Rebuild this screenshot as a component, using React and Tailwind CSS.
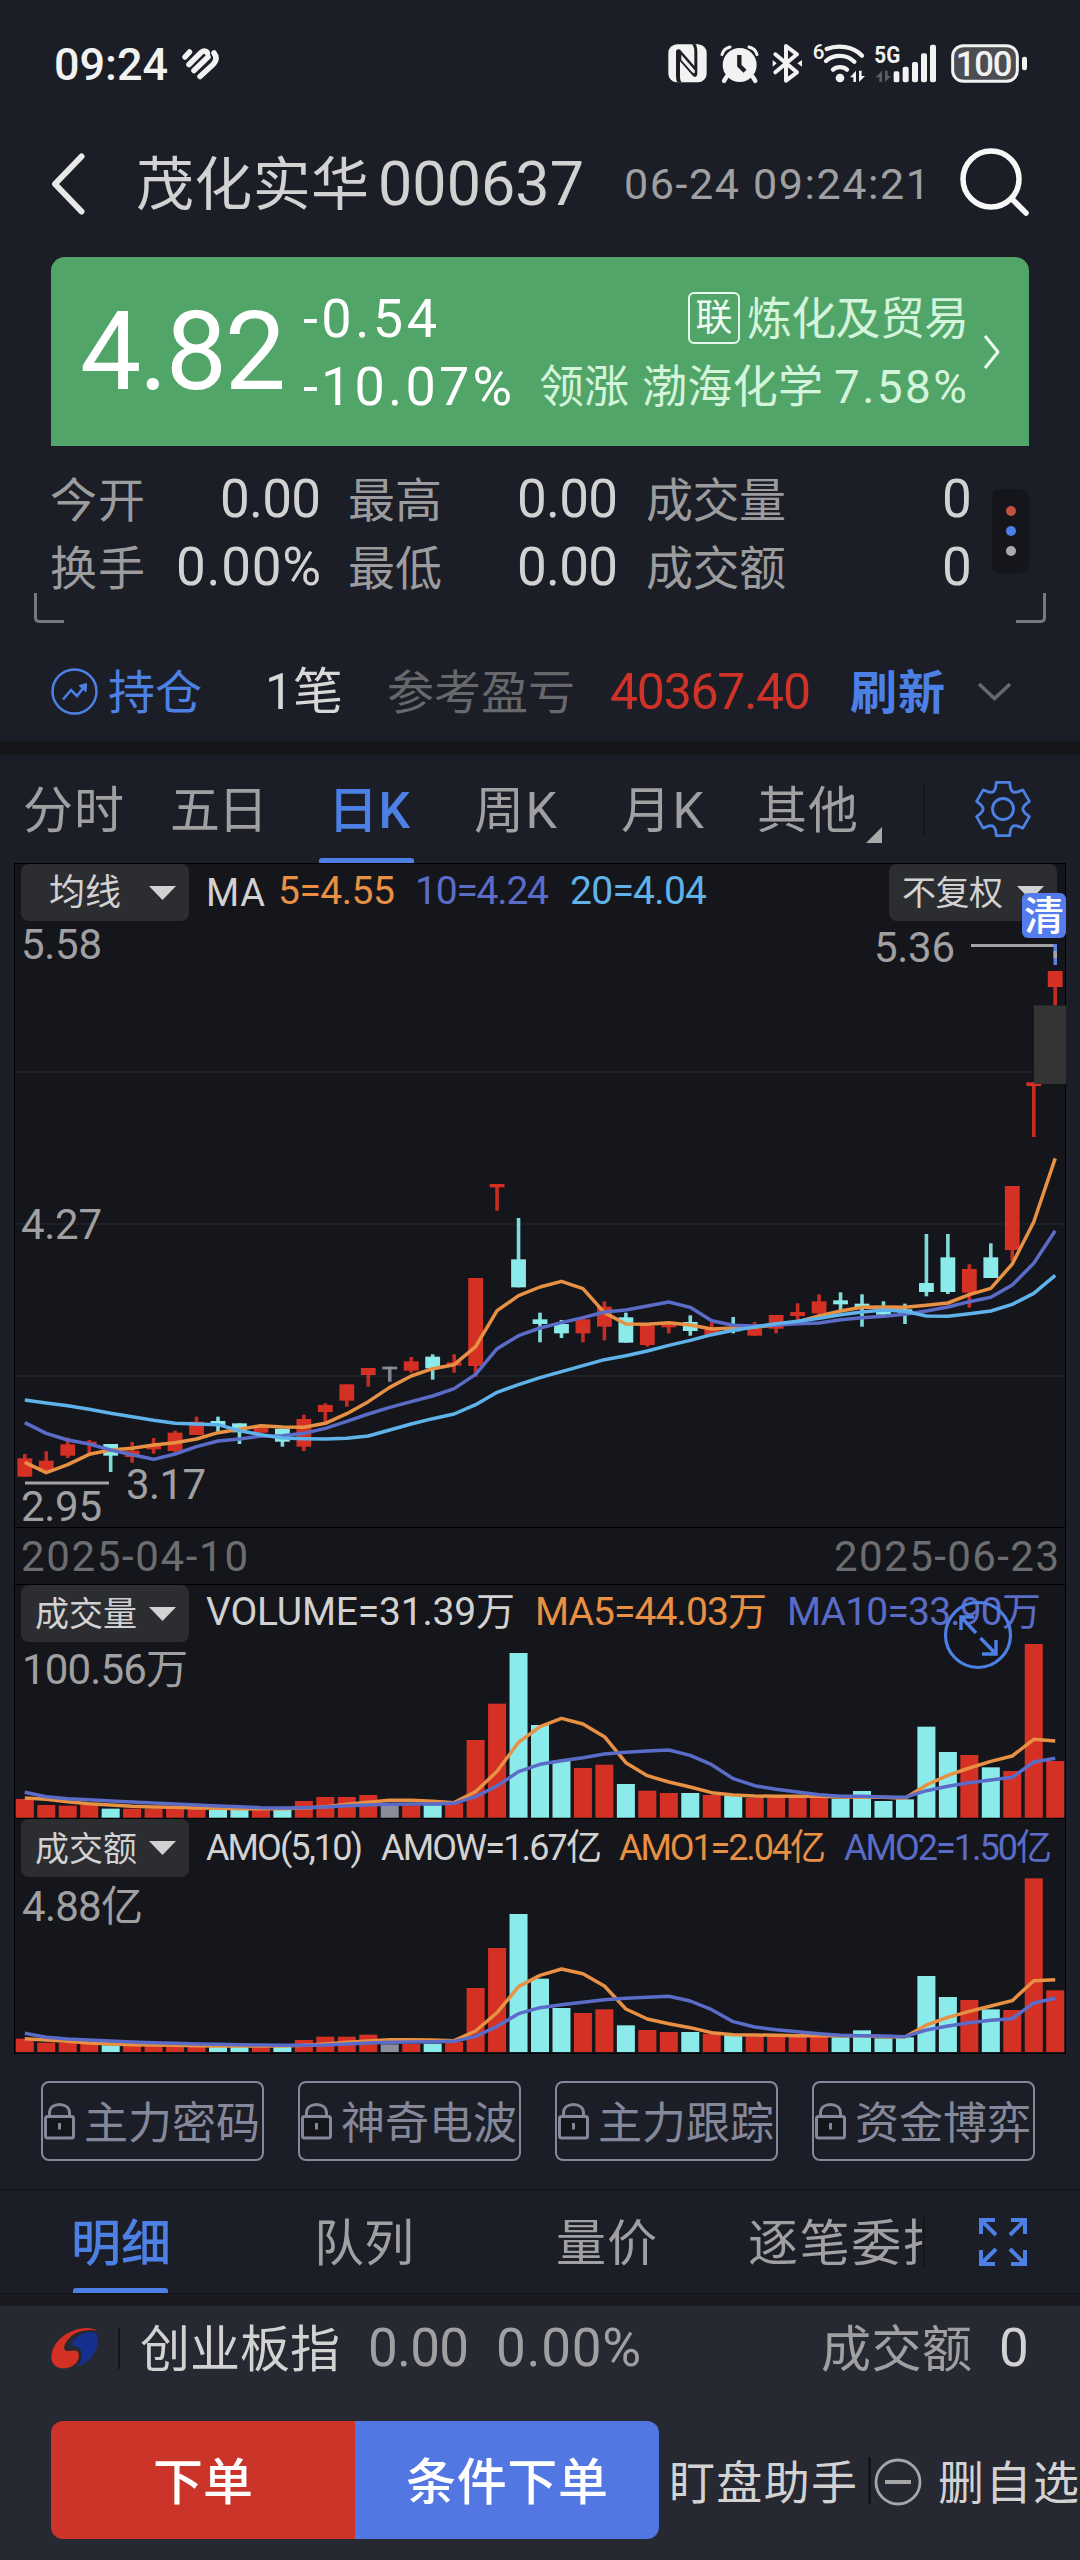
import React, { useLayoutEffect, useRef, useState } from 'react';

/* Spreads its characters so that the text fills exactly the width w. */
function Fit({ w, className = '', children }) {
  const ref = useRef(null);
  const [gap, setGap] = useState(0);
  useLayoutEffect(() => {
    const natural = ref.current.getBoundingClientRect().width;
    const n = Array.from(children).length;
    if (n > 1) setGap((w - natural) / (n - 1));
  }, []);
  return (
    <div className={'shrink-0 whitespace-nowrap leading-none ' + className} style={{ width: w }}>
      <span ref={ref} className="inline-block" style={{ letterSpacing: gap }}>
        {children}
      </span>
    </div>
  );
}

const RED = '#d53024';
const CYAN = '#8bebeb';
const GRAY = '#8b8d9b';
const tone = { r: RED, g: CYAN, n: GRAY };
const X0 = 24.8;
const STEP = 21.467;
const cx = (i) => X0 + STEP * i;

const dirs = 'rrrrgrrrrggrgrrrrnrgrrrgggrrgrrgrgrrrrggggggrgrrr'.split('');

/* [high, body top, body bottom, low] in thirds of a pixel, measured from y = 860 */
const candles = [
  [1782, 1795, 1850, 1850], [1774, 1802, 1835, 1835], [1733, 1753, 1787, 1794], [1740, 1745, 1752, 1780],
  [1752, 1752, 1787, 1836], [1746, 1772, 1791, 1808], [1734, 1756, 1768, 1781], [1712, 1718, 1773, 1778],
  [1670, 1685, 1725, 1725], [1670, 1683, 1696, 1716], [1690, 1690, 1717, 1752], [1695, 1701, 1718, 1718],
  [1706, 1706, 1745, 1760], [1664, 1677, 1760, 1773], [1630, 1635, 1656, 1685], [1573, 1573, 1622, 1640],
  [1524, 1524, 1545, 1580], [1520, 1520, 1528, 1565], [1491, 1504, 1532, 1538], [1483, 1490, 1525, 1559],
  [1483, 1507, 1517, 1538], [1254, 1254, 1518, 1550], [972, 972, 982, 1052], [1074, 1198, 1282, 1282],
  [1358, 1378, 1392, 1447], [1380, 1392, 1420, 1434], [1370, 1378, 1420, 1447], [1324, 1340, 1400, 1441],
  [1358, 1372, 1448, 1448], [1390, 1398, 1455, 1460], [1385, 1393, 1402, 1420], [1366, 1386, 1413, 1427],
  [1387, 1407, 1424, 1424], [1371, 1405, 1414, 1420], [1386, 1405, 1427, 1427], [1365, 1365, 1406, 1420],
  [1330, 1356, 1368, 1382], [1303, 1324, 1360, 1365], [1297, 1321, 1333, 1350], [1303, 1331, 1342, 1400],
  [1324, 1345, 1364, 1365], [1331, 1348, 1358, 1392], [1122, 1269, 1296, 1309], [1122, 1192, 1296, 1302],
  [1213, 1227, 1298, 1343], [1150, 1192, 1254, 1254], [978, 978, 1170, 1204], [667, 667, 678, 831],
  [333, 333, 381, 436],
];
const ma5 = [1807, 1838, 1814, 1783, 1770, 1765, 1755, 1748, 1737, 1718, 1708, 1697, 1701, 1702, 1690, 1661, 1625, 1582, 1548, 1526, 1514, 1460, 1352, 1307, 1281, 1264, 1286, 1358, 1392, 1393, 1388, 1395, 1407, 1404, 1402, 1395, 1385, 1368, 1353, 1342, 1341, 1342, 1336, 1329, 1304, 1285, 1212, 1086, 895];
const ma10 = [1688, 1720, 1740, 1752, 1770, 1784, 1798, 1782, 1760, 1743, 1737, 1728, 1727, 1720, 1705, 1684, 1662, 1642, 1625, 1608, 1586, 1543, 1466, 1427, 1404, 1388, 1373, 1356, 1350, 1338, 1326, 1342, 1382, 1396, 1398, 1395, 1391, 1389, 1379, 1373, 1369, 1363, 1353, 1341, 1325, 1312, 1275, 1210, 1112];
const ma20 = [1620, 1629, 1637, 1648, 1660, 1670, 1681, 1690, 1692, 1694, 1712, 1724, 1734, 1736, 1737, 1735, 1728, 1710, 1692, 1676, 1662, 1634, 1597, 1574, 1553, 1535, 1517, 1499, 1487, 1473, 1456, 1441, 1424, 1411, 1401, 1391, 1384, 1375, 1364, 1356, 1350, 1354, 1368, 1369, 1361, 1353, 1333, 1300, 1246];

/* thirds of a pixel from y = 1520 */
const vol = [837, 855, 857, 855, 866, 866, 866, 864, 864, 869, 869, 869, 869, 843, 831, 831, 825, 857, 856, 856, 850, 660, 551, 399, 615, 722, 744, 734, 792, 812, 819, 819, 825, 828, 834, 834, 834, 834, 836, 813, 843, 838, 620, 696, 705, 742, 753, 372, 723];
const vol5 = [834, 838, 845, 851, 855, 859, 861, 862, 864, 865, 866, 866, 866, 864, 860, 853, 847, 841, 841, 844, 848, 815, 754, 667, 620, 595, 612, 650, 728, 767, 786, 801, 818, 825, 828, 829, 829, 829, 831, 832, 832, 835, 795, 766, 744, 724, 708, 658, 663];
const vol10 = [817, 830, 836, 839, 843, 846, 849, 852, 855, 858, 860, 863, 864, 863, 861, 857, 855, 853, 852, 852, 850, 830, 798, 755, 733, 722, 713, 702, 697, 693, 690, 706, 734, 776, 797, 808, 816, 824, 829, 829, 831, 832, 812, 799, 788, 780, 772, 726, 715];

/* thirds of a pixel from y = 1810 */
const amo = [686, 698, 698, 696, 706, 706, 706, 705, 704, 709, 709, 709, 709, 690, 680, 680, 674, 703, 702, 701, 696, 534, 414, 312, 506, 594, 609, 598, 646, 660, 666, 666, 671, 674, 679, 679, 679, 679, 682, 661, 685, 682, 498, 561, 570, 598, 600, 205, 541];
const amo5 = [686, 690, 694, 699, 702, 704, 705, 706, 707, 708, 708, 708, 708, 706, 702, 697, 693, 689, 689, 690, 692, 663, 608, 530, 496, 477, 491, 528, 597, 627, 641, 653, 668, 674, 675, 676, 677, 677, 677, 677, 680, 681, 645, 622, 604, 588, 572, 512, 509];
const amo10 = [670, 682, 687, 690, 693, 696, 698, 700, 702, 703, 704, 705, 706, 706, 705, 702, 699, 697, 696, 695, 694, 679, 649, 611, 593, 584, 577, 569, 565, 562, 559, 573, 599, 635, 651, 659, 665, 671, 676, 677, 678, 680, 660, 648, 638, 631, 626, 579, 565];

function Line({ data, base, color }) {
  return (
    <polyline
      points={data.map((v, i) => `${cx(i)},${base + v / 3}`).join(' ')}
      fill="none"
      stroke={color}
      strokeWidth="3.5"
      strokeLinejoin="round"
    />
  );
}

function Bars({ data, base, bottom }) {
  return data.map((v, i) => (
    <rect key={i} x={Math.max(15.5, cx(i) - 9)} y={base + v / 3} width="18" height={bottom - base - v / 3} fill={tone[dirs[i]]} />
  ));
}

const axis = 'font-[Roboto,"Noto_Sans_CJK_SC",sans-serif] text-[42px]';

function PriceChart() {
  return (
    <svg className="absolute inset-0 overflow-visible" width="1050" height="663" viewBox="15 864 1050 663">
      {[1072, 1224, 1376].map((y) => (
        <line key={y} x1="15" x2="1065" y1={y} y2={y} stroke="#212328" strokeWidth="1.5" />
      ))}
      {candles.map(([h, t, b, l], i) => (
        <g key={i} fill={tone[dirs[i]]}>
          <rect x={cx(i) - 1.8} y={860 + h / 3} width="3.6" height={(l - h) / 3} opacity="0.92" />
          <rect x={cx(i) - 7.4} y={860 + t / 3} width="14.8" height={(b - t) / 3} />
        </g>
      ))}
      <Line data={ma5} base={860} color="#e89043" />
      <Line data={ma10} base={860} color="#5a6cc8" />
      <Line data={ma20} base={860} color="#5fb3ea" />
      <rect x="1034" y="1005.5" width="32" height="78.5" fill="#343434" />
      <line x1="971" x2="1056" y1="945.5" y2="945.5" stroke="#a3a3a5" strokeWidth="3" />
      <rect x="1053.5" y="944" width="3.5" height="21" fill="#5b80e6" />
      <rect x="1053.5" y="951" width="3.5" height="7" fill="#a3a3a5" />
      <line x1="25" x2="109" y1="1483" y2="1483" stroke="#a3a3a5" strokeWidth="3" />
      <g fill="#a0a0a2" className={axis}>
        <text x="21" y="959" textLength="81">5.58</text>
        <text x="21" y="1239" textLength="81">4.27</text>
        <text x="21" y="1520.5" textLength="81">2.95</text>
        <text x="126" y="1498.5" textLength="80">3.17</text>
        <text x="874" y="961.5" textLength="81">5.36</text>
      </g>
    </svg>
  );
}

function Caret() {
  return (
    <svg width="27" height="14" viewBox="0 0 27 14" className="shrink-0">
      <path d="M0 0H27L13.5 14Z" fill="#d2d2d2" />
    </svg>
  );
}

function StatusIcons() {
  return (
    <svg width="380" height="66" viewBox="0 0 1140 198" className="ml-auto mr-[40px] -mt-[2px] shrink-0" fill="#f2f2f2">
      {/* NFC */}
      <rect x="25" y="43" width="115" height="114" rx="26" />
      <path d="M52 157C48 150 48 142 48 130V66C48 56 58 56 63 62L103 108V62C103 52 99 46 95 43H107C112 52 112 58 112 70V130C112 142 104 144 97 136L60 94V140C60 148 62 154 66 157Z" fill="#1b1e25" />
      <path d="M64 74L104 121V128C101 131 99 129 96 126L64 90Z" />
      {/* alarm clock */}
      <circle cx="239" cy="105" r="51" />
      <path d="M238 75V107L255 124" fill="none" stroke="#1b1e25" strokeWidth="13" />
      <path d="M186 74C189 62 198 54 210 51M291 74C288 62 279 54 267 51" fill="none" stroke="#f2f2f2" strokeWidth="9" strokeLinecap="round" />
      <path d="M200 140L192 153M278 140L286 153" stroke="#f2f2f2" strokeWidth="13" strokeLinecap="round" />
      {/* bluetooth */}
      <path d="M346 73L411 127L378 152V48L411 73L346 127" fill="none" stroke="#f2f2f2" strokeWidth="12" strokeLinejoin="round" strokeLinecap="round" />
      <path d="M338 90L350 100L338 110ZM426 90L412 100L426 110Z" />
      {/* wifi */}
      <text x="458" y="86" className="font-[Roboto] text-[62px] font-medium">6</text>
      <path d="M500 57C535 43 580 50 606 77M498 93C520 72 560 72 583 95M519 119C530 109 550 109 561 119" fill="none" stroke="#f2f2f2" strokeWidth="13" strokeLinecap="round" />
      <circle cx="540" cy="144" r="13" />
      <path d="M588 122V156H580V142H570ZM597 122V156L615 138H605V122Z" />
      {/* mobile signal */}
      <text x="643" y="98" textLength="78" lengthAdjust="spacingAndGlyphs" className="font-[Roboto] text-[72px] font-bold">5G</text>
      <path d="M666 122V156H658V142H647ZM675 122V156L693 138H683V122Z" fill="#5c5d62" />
      <rect x="701" y="124" width="17" height="33" rx="5" />
      <rect x="728" y="110" width="18" height="47" rx="6" />
      <rect x="756" y="96" width="18" height="61" rx="6" />
      <rect x="783" y="70" width="18" height="87" rx="6" />
      <rect x="810" y="44" width="18" height="113" rx="6" />
      {/* battery */}
      <rect x="878" y="47" width="194" height="107" rx="32" fill="#4c4d52" stroke="#f2f2f2" strokeWidth="9" />
      <rect x="1086" y="80" width="15" height="41" rx="7" />
      <text x="887" y="137" textLength="170" className="font-[Roboto] text-[104px] font-medium">100</text>
    </svg>
  );
}

const gearPoints = (() => {
  const p = [];
  for (let k = 0; k < 6; k++) {
    const a = k * 60 - 90;
    [[-27, 20], [-20, 22], [-14, 27.5], [14, 27.5], [20, 22], [27, 20]].forEach(([d, r]) => {
      const t = ((a + d) * Math.PI) / 180;
      p.push(`${30 + r * Math.cos(t)},${30 + r * Math.sin(t)}`);
    });
  }
  return p.join(' ');
})();

function Stat({ label, lw, value, vw, width }) {
  return (
    <div className={'flex h-[68px] shrink-0 items-center justify-between ' + width}>
      <Fit w={lw} className="mt-[4px] text-[47px] text-[#9c9c9e]">{label}</Fit>
      <Fit w={vw} className="mt-[2px] text-[53px] text-[#d2d2d2]">{value}</Fit>
    </div>
  );
}

function LockButton({ children }) {
  return (
    <div className="flex h-[80px] w-[223px] shrink-0 items-center rounded-[8px] border-2 border-[#85879a] pl-px">
      <svg width="31" height="37" viewBox="0 0 31 37" className="shrink-0" fill="none" stroke="#85879a">
        <path d="M5.5 13V10C5.5 4.5 10 1.5 15.5 1.5S25.5 4.5 25.5 10V13" strokeWidth="3" />
        <rect x="1.5" y="13.5" width="28" height="21.5" rx="2" fill="#15161b" strokeWidth="3" />
        <path d="M15.5 20V26.5" strokeWidth="3" />
      </svg>
      <Fit w={176} className="ml-[9px] mt-[6px] text-[44px] text-[#85879a]">{children}</Fit>
    </div>
  );
}

export default function App() {
  return (
    <div className='flex h-[2560px] w-[1080px] flex-col overflow-hidden bg-[#1b1e26] font-[Roboto,"Noto_Sans_CJK_SC",sans-serif]'>
      {/* status bar */}
      <div className="flex h-[128px] shrink-0 items-center">
        <Fit w={114} className="ml-[54px] text-[45px] font-medium text-[#f2f2f2]">09:24</Fit>
        <svg width="38" height="32" viewBox="0 0 38 32" className="ml-[13px] shrink-0" fill="none" stroke="#f2f2f2" strokeWidth="5.5" strokeLinecap="round">
          <path d="M4 9L8.500 4M8 16.500L20 4.500C23 2 26 3 26.500 5.500M13 22.500L27 9M33 5C36 9 35.500 13 32 16.500L19 28.500" />
        </svg>
        <StatusIcons />
      </div>

      {/* title bar */}
      <div className="flex h-[111px] shrink-0 items-center">
        <svg width="34" height="62" viewBox="0 0 34 62" className="ml-[51px] shrink-0">
          <path d="M30.5 3.5L4 31L30.5 58.5" fill="none" stroke="#e8e8e8" strokeWidth="6" strokeLinecap="round" strokeLinejoin="round" />
        </svg>
        <Fit w={233} className="ml-[51px] mt-[2px] text-[58px] text-[#d2d2d2]">茂化实华</Fit>
        <Fit w={206} className="ml-[9px] mt-px text-[61px] text-[#d2d2d2]">000637</Fit>
        <Fit w={306} className="ml-[40px] mt-px text-[43px] text-[#a0a0a2]">06-24 09:24:21</Fit>
        <svg width="72" height="72" viewBox="0 0 72 72" className="ml-[29px] shrink-0" fill="none" stroke="#f8f8f8" strokeWidth="5.5" strokeLinecap="round">
          <circle cx="32" cy="31" r="28" />
          <path d="M53 51L67 65" />
        </svg>
      </div>

      {/* price card */}
      <div className="mx-[51px] mt-[18px] flex h-[189px] shrink-0 items-center rounded-t-[14px] bg-[#52a569] text-white">
        <Fit w={206} className="ml-[29px] mt-[2px] text-[109px]">4.82</Fit>
        <div className="ml-[17px] w-[212px] shrink-0 text-[54px]">
          <div className="flex h-[68px] items-center"><Fit w={134} className="mt-[2px]">-0.54</Fit></div>
          <div className="flex h-[68px] items-center"><Fit w={209} className="mt-[2px]">-10.07%</Fit></div>
        </div>
        <div className="ml-[24px] w-[429px] shrink-0 text-[45px] text-[#d4f4dc]">
          <div className="flex h-[68px] items-center justify-end">
            <div className="flex h-[52px] w-[52px] items-center justify-center rounded-[6px] border-2 border-[#e6fbeb] text-[37px] leading-none text-[#effcf2]">
              <span className="mt-[2px]">联</span>
            </div>
            <Fit w={222} className="ml-[7px] mt-[3px] -mr-px">炼化及贸易</Fit>
          </div>
          <div className="flex h-[68px] items-center">
            <Fit w={90} className="mt-[4px]">领涨</Fit>
            <Fit w={181} className="ml-[13px] mt-[4px]">渤海化学</Fit>
            <Fit w={133} className="ml-[11px] mt-[2px] text-[46px]">7.58%</Fit>
          </div>
        </div>
        <svg width="17" height="34" viewBox="0 0 17 34" className="ml-[15px] shrink-0">
          <path d="M2 1L15 17L2 33" fill="none" stroke="#f0fbf2" strokeWidth="3" strokeLinejoin="round" />
        </svg>
      </div>

      {/* quote figures */}
      <div className="flex h-[154px] shrink-0 pl-[50px] pt-[18px]">
        <div className="flex flex-col">
          <Stat label="今开" lw={95} value="0.00" vw={101} width="w-[271px]" />
          <Stat label="换手" lw={95} value="0.00%" vw={145} width="w-[271px]" />
        </div>
        <div className="ml-[27px] flex flex-col">
          <Stat label="最高" lw={94} value="0.00" vw={101} width="w-[270px]" />
          <Stat label="最低" lw={94} value="0.00" vw={101} width="w-[270px]" />
        </div>
        <div className="ml-[28px] flex flex-col">
          <Stat label="成交量" lw={140} value="0" vw={30} width="w-[326px]" />
          <Stat label="成交额" lw={140} value="0" vw={30} width="w-[326px]" />
        </div>
        <div className="ml-[20px] mt-[25px] flex h-[84px] w-[37px] flex-col items-center justify-center gap-[10px] rounded-[8px] bg-[#15161b]">
          <div className="h-[10px] w-[10px] rounded-full bg-[#c05240]" />
          <div className="h-[10px] w-[10px] rounded-full bg-[#4d80e6]" />
          <div className="h-[10px] w-[10px] rounded-full bg-[#ababab]" />
        </div>
      </div>
      <div className="-mt-[7px] flex h-[30px] shrink-0 justify-between px-[34px]">
        <div className="w-[30px] rounded-bl-[5px] border-b-3 border-l-3 border-[#77787b]" />
        <div className="w-[30px] rounded-br-[5px] border-b-3 border-r-3 border-[#77787b]" />
      </div>

      {/* holding summary */}
      <div className="flex h-[118px] shrink-0 items-center pt-[18px]">
        <svg width="47" height="47" viewBox="0 0 47 47" className="ml-[51px] shrink-0" fill="none" stroke="#4d80e4" strokeWidth="2.5">
          <circle cx="23.5" cy="23.5" r="22" />
          <path d="M12 31.5L20 22L26 28L34.5 17" />
          <path d="M28 17.5L35.5 15.5L35 24Z" fill="#4d80e4" strokeWidth="1" />
        </svg>
        <Fit w={94} className="ml-[10px] mt-[3px] text-[47px] text-[#4d80e4]">持仓</Fit>
        <Fit w={78} className="ml-[63px] mt-px text-[50px] text-[#d8d8d8]">1笔</Fit>
        <Fit w={188} className="ml-[44px] mt-[3px] text-[47px] text-[#67686b]">参考盈亏</Fit>
        <Fit w={201} className="ml-[35px] mt-px text-[50px] text-[#cf3227]">40367.40</Fit>
        <Fit w={95} className="ml-[39px] mt-[3px] text-[47px] font-bold text-[#4d80e4]">刷新</Fit>
        <svg width="35" height="19" viewBox="0 0 35 19" className="ml-[32px] shrink-0">
          <path d="M2 2L17.5 16.5L33 2" fill="none" stroke="#67686b" strokeWidth="3.6" />
        </svg>
      </div>
      <div className="h-[14px] shrink-0 bg-[#15161a]" />

      {/* period tabs */}
      <div className="relative flex h-[108px] shrink-0 items-center text-[50px] text-[#a0a0a2]">
        <Fit w={101} className="ml-[23px] mt-[4px]">分时</Fit>
        <Fit w={98} className="ml-[46px] mt-[4px]">五日</Fit>
        <div className="relative ml-[60px] flex h-full items-center">
          <Fit w={82} className="mt-[4px] font-medium text-[#4d80e4]">日K</Fit>
          <div className="absolute bottom-0 -left-[9px] h-[5px] w-[95px] rounded-t-[3px] bg-[#4d80e4]" />
        </div>
        <Fit w={83} className="ml-[64px] mt-[4px]">周K</Fit>
        <Fit w={83} className="ml-[64px] mt-[4px]">月K</Fit>
        <Fit w={101} className="ml-[53px] mt-[4px]">其他</Fit>
        <svg width="16" height="16" viewBox="0 0 16 16" className="mb-[20px] ml-[8px] shrink-0 self-end">
          <path d="M16 0V16H0Z" fill="#a9a9a9" />
        </svg>
        <div className="ml-[41px] h-[51px] w-[2px] bg-[#15161a]" />
        <svg width="60" height="60" viewBox="0 0 60 60" className="ml-[48px] shrink-0" fill="none" stroke="#4d80e4" strokeWidth="2.8" strokeLinejoin="round">
          <polygon points={gearPoints} />
          <circle cx="30" cy="30" r="10.5" />
        </svg>
      </div>

      {/* chart panel */}
      <div className="mx-[14px] h-[1191px] shrink-0 border border-black bg-[#15161b]">
        <div className="relative h-[663px]">
          <PriceChart />
          <div className="relative flex h-[57px] items-center text-[39px]">
            <div className="ml-[6px] flex h-full w-[168px] shrink-0 items-center rounded-[8px] bg-[#2c2d31] pl-[28px]">
              <Fit w={72} className="text-[36px] text-[#d2d2d2]">均线</Fit>
              <div className="ml-[28px] flex"><Caret /></div>
            </div>
            <Fit w={59} className="ml-[17px] text-[38px] text-[#d2d2d2]">MA</Fit>
            <Fit w={117} className="ml-[13px] -mt-[3px] text-[#e89043]">5=4.55</Fit>
            <Fit w={134} className="ml-[20px] -mt-[3px] text-[#5a6cc8]">10=4.24</Fit>
            <Fit w={137} className="ml-[21px] -mt-[3px] text-[#5fb3ea]">20=4.04</Fit>
            <div className="ml-[182px] flex h-full w-[168px] shrink-0 items-center rounded-[8px] bg-[#2c2d31] pl-[13px]">
              <Fit w={101} className="text-[34px] text-[#d2d2d2]">不复权</Fit>
              <div className="ml-[14px] flex"><Caret /></div>
            </div>
          </div>
          <div className="absolute -right-px top-[29px] flex h-[45px] w-[44px] items-center justify-center rounded-[6px] bg-[#557cec] text-[40px] font-medium leading-none text-white">
            <span className="mt-[2px]">清</span>
          </div>
        </div>

        <div className="flex h-[58px] items-center justify-between border-y border-black pl-[6px] pr-[6px] pt-[2px] text-[42px] text-[#6c6d70]">
          <Fit w={227}>2025-04-10</Fit>
          <Fit w={225}>2025-06-23</Fit>
        </div>

        {/* volume */}
        <div className="relative h-[234px] border-b border-black">
          <svg className="absolute inset-0" width="1050" height="233" viewBox="15 1585 1050 233">
            <Bars data={vol} base={1520} bottom={1817.7} />
            <Line data={vol5} base={1520} color="#e89043" />
            <Line data={vol10} base={1520} color="#5a6cc8" />
            <text x="22" y="1683.5" textLength="166" fill="#a0a0a2" className={axis}>100.56万</text>
          </svg>
          <div className="relative flex h-[57px] items-center text-[39px]">
            <div className="ml-[6px] flex h-full w-[168px] shrink-0 items-center rounded-[8px] bg-[#2c2d31] pl-[14px]">
              <Fit w={102} className="mt-px text-[34px] text-[#d2d2d2]">成交量</Fit>
              <div className="ml-[12px] flex"><Caret /></div>
            </div>
            <Fit w={309} className="-mt-[2px] ml-[17px] text-[#d2d2d2]">VOLUME=31.39万</Fit>
            <Fit w={232} className="-mt-[2px] ml-[20px] text-[#e89043]">MA5=44.03万</Fit>
            <Fit w={254} className="-mt-[2px] ml-[20px] text-[#5a6cc8]">MA10=33.90万</Fit>
          </div>
          <svg width="70" height="72" viewBox="0 0 70 72" className="absolute right-[52px] top-[14px]" fill="none" stroke="#4d80e4" strokeWidth="3.2">
            <circle cx="35" cy="36" r="32.5" />
            <path d="M33 34L19 19M18 31V18H31M37.5 39L52 54M53 41V55H39" strokeWidth="3.4" />
          </svg>
        </div>

        {/* turnover */}
        <div className="relative h-[234px]">
          <svg className="absolute inset-0" width="1050" height="233" viewBox="15 1819 1050 233">
            <Bars data={amo} base={1810} bottom={2052} />
            <Line data={amo5} base={1810} color="#e89043" />
            <Line data={amo10} base={1810} color="#5a6cc8" />
            <text x="22" y="1920.5" textLength="121" fill="#a0a0a2" className={axis}>4.88亿</text>
          </svg>
          <div className="relative flex h-[58px] items-center text-[36px]">
            <div className="ml-[6px] flex h-full w-[168px] shrink-0 items-center rounded-[8px] bg-[#2c2d31] pl-[14px]">
              <Fit w={102} className="mt-[2px] text-[34px] text-[#d2d2d2]">成交额</Fit>
              <div className="ml-[12px] flex"><Caret /></div>
            </div>
            <Fit w={157} className="ml-[17px] text-[#d2d2d2]">AMO(5,10)</Fit>
            <Fit w={221} className="ml-[18px] text-[#d2d2d2]">AMOW=1.67亿</Fit>
            <Fit w={207} className="ml-[17px] text-[#e89043]">AMO1=2.04亿</Fit>
            <Fit w={208} className="ml-[18px] text-[#5a6cc8]">AMO2=1.50亿</Fit>
          </div>
        </div>
      </div>

      {/* locked indicators */}
      <div className="flex h-[135px] shrink-0 gap-[34px] pl-[41px] pt-[27px]">
        <LockButton>主力密码</LockButton>
        <LockButton>神奇电波</LockButton>
        <LockButton>主力跟踪</LockButton>
        <LockButton>资金博弈</LockButton>
      </div>

      {/* detail tabs */}
      <div className="flex h-[106px] shrink-0 items-center border-y-2 border-[#15171b] text-[50px] text-[#a0a0a2]">
        <div className="relative ml-[71px] flex h-full items-center">
          <Fit w={100} className="mt-[4px] font-medium text-[#4d80e4]">明细</Fit>
          <div className="absolute bottom-0 left-[2px] h-[5px] w-[95px] rounded-t-[3px] bg-[#4d80e4]" />
        </div>
        <Fit w={100} className="ml-[143px] mt-[4px]">队列</Fit>
        <Fit w={101} className="ml-[142px] mt-[4px]">量价</Fit>
        <div className="ml-[91px] mt-[4px] w-[175px] shrink-0 overflow-hidden py-[6px]">
          <Fit w={205}>逐笔委托</Fit>
        </div>
        <div className="h-[51px] w-[2px] bg-[#15171b]" />
        <svg width="48" height="48" viewBox="0 0 48 48" className="ml-[54px] shrink-0" fill="none" stroke="#4d80e4" strokeWidth="4">
          <path d="M2 16V2H16M2 2L17 17M32 2H46V16M46 2L31 17M2 32V46H16M2 46L17 31M46 32V46H32M46 46L31 31" />
        </svg>
      </div>
      <div className="h-[11px] shrink-0 bg-[#191b20]" />

      {/* index bar and actions */}
      <div className="flex min-h-0 flex-1 flex-col bg-[#262832]">
        <div className="flex h-[84px] items-center">
          <svg width="47" height="47" viewBox="33 45 140 140" className="ml-[51px] shrink-0">
            <path d="M170 62C150 48 110 52 78 72C45 93 30 125 35 150C42 175 75 182 100 165C118 152 120 130 110 122C98 118 84 126 75 120C66 110 80 85 105 70C130 58 155 58 170 62Z" fill="#d53024" />
            <path d="M168 70C178 85 172 120 150 145C138 157 125 165 112 168C126 150 130 128 118 114C110 108 98 112 96 104C98 88 118 72 140 68C155 66 165 67 168 70Z" fill="#15308f" />
          </svg>
          <div className="ml-[20px] h-[41px] w-[2px] bg-[#15161b]" />
          <Fit w={200} className="ml-[20px] mt-[4px] text-[50px] text-[#d2d2d2]">创业板指</Fit>
          <Fit w={101} className="ml-[28px] mt-px text-[53px] text-[#a0a0a2]">0.00</Fit>
          <Fit w={145} className="ml-[27px] mt-px text-[53px] text-[#a0a0a2]">0.00%</Fit>
          <Fit w={151} className="ml-[180px] mt-[4px] text-[50px] text-[#a0a0a2]">成交额</Fit>
          <Fit w={30} className="ml-[27px] mt-px text-[53px] text-[#d2d2d2]">0</Fit>
        </div>
        <div className="mt-[31px] flex h-[118px] items-center">
          <div className="ml-[51px] flex h-full shrink-0 overflow-hidden rounded-[12px] text-[50px] font-medium leading-none text-white">
            <div className="flex w-[304px] items-center justify-center bg-[#ca3429]"><span className="mt-[6px]">下单</span></div>
            <div className="flex w-[304px] items-center justify-center bg-[#5276e2]"><Fit w={202} className="mt-[6px]">条件下单</Fit></div>
          </div>
          <Fit w={188} className="ml-[10px] mt-[6px] text-[46px] text-[#d2d2d2]">盯盘助手</Fit>
          <div className="ml-[11px] h-[47px] w-[3px] shrink-0 bg-[#15161b]" />
          <svg width="48" height="48" viewBox="0 0 48 48" className="ml-[3px] mt-[3px] shrink-0" fill="none" stroke="#a6a6a8" strokeWidth="2.8">
            <circle cx="24" cy="24" r="22" />
            <path d="M11 24H37" strokeWidth="4" />
          </svg>
          <Fit w={141} className="ml-[16px] mt-[6px] text-[46px] text-[#d2d2d2]">删自选</Fit>
        </div>
      </div>
    </div>
  );
}
